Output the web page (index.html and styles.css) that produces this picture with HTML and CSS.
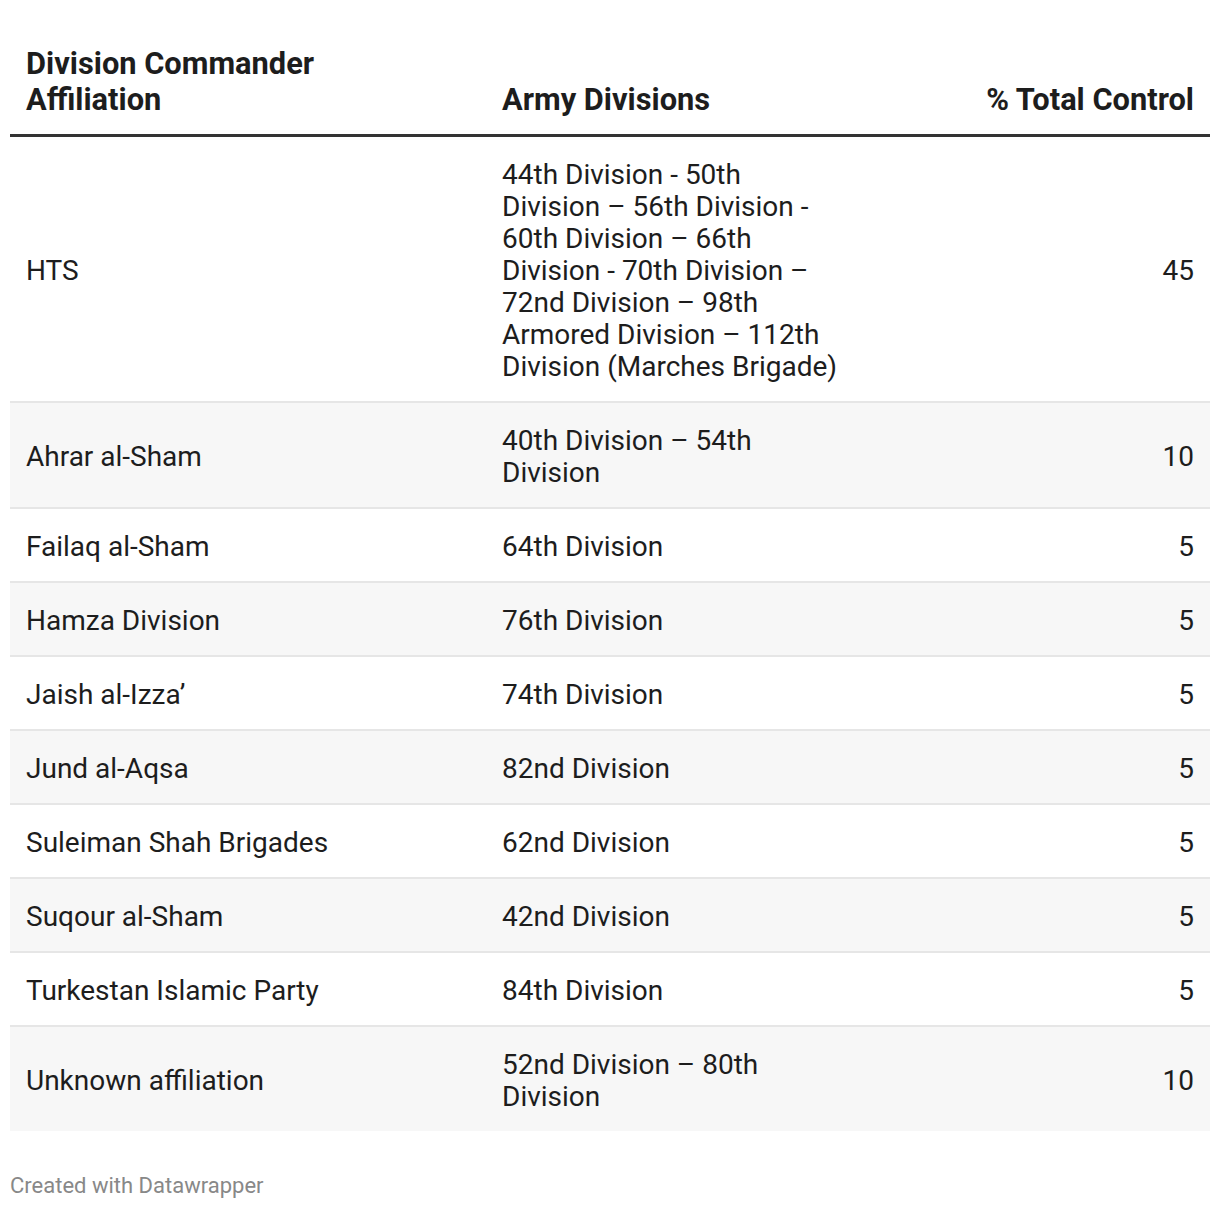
FILE: index.html
```html
<!DOCTYPE html>
<html>
<head>
<meta charset="utf-8">
<link rel="stylesheet" href="styles.css">
</head>
<body>
<div class="chart">
  <table class="dw-table">
    <thead>
      <tr>
        <th class="c1"><span class="th-wrap">Division Commander Affiliation</span></th>
        <th class="c2">Army Divisions</th>
        <th class="c3">% Total Control</th>
      </tr>
    </thead>
    <tbody>
      <tr><td>HTS</td><td>44th Division - 50th Division – 56th Division - 60th Division – 66th Division - 70th Division – 72nd Division – 98th Armored Division – 112th Division (Marches Brigade)</td><td class="num">45</td></tr>
      <tr><td>Ahrar al-Sham</td><td>40th Division – 54th Division</td><td class="num">10</td></tr>
      <tr><td>Failaq al-Sham</td><td>64th Division</td><td class="num">5</td></tr>
      <tr><td>Hamza Division</td><td>76th Division</td><td class="num">5</td></tr>
      <tr><td>Jaish al-Izza’</td><td>74th Division</td><td class="num">5</td></tr>
      <tr><td>Jund al-Aqsa</td><td>82nd Division</td><td class="num">5</td></tr>
      <tr><td>Suleiman Shah Brigades</td><td>62nd Division</td><td class="num">5</td></tr>
      <tr><td>Suqour al-Sham</td><td>42nd Division</td><td class="num">5</td></tr>
      <tr><td>Turkestan Islamic Party</td><td>84th Division</td><td class="num">5</td></tr>
      <tr><td>Unknown affiliation</td><td>52nd Division – 80th Division</td><td class="num">10</td></tr>
    </tbody>
  </table>
  <div class="footer">Created with Datawrapper</div>
</div>
</body>
</html>
```
FILE: styles.css
```css
html, body {
  margin: 0;
  padding: 0;
  background: #ffffff;
}
.chart {
  padding: 46px 10px 0 10px;
  font-family: Roboto, "Liberation Sans", sans-serif;
  color: #1d1d1d;
}
.dw-table {
  width: 1200px;
  border-collapse: collapse;
  table-layout: fixed;
}
.dw-table th {
  font-weight: 700;
  font-size: 30.8px;
  line-height: 36px;
  text-align: left;
  vertical-align: bottom;
  padding: 0 16px 16px 16px;
  border-bottom: 3px solid #333333;
}
.dw-table th.c1 { width: 444px; }
.dw-table th.c2 { width: 338px; }
.dw-table th.c3 { text-align: right; }
.th-wrap {
  display: block;
  max-width: 320px;
}
.dw-table td {
  font-size: 28px;
  line-height: 32px;
  padding: 22px 16px 18px 16px;
  vertical-align: middle;
  border-bottom: 2px solid #e6e6e6;
}
.dw-table tbody tr:nth-child(even) td {
  background: #f7f7f7;
}
.dw-table tbody tr:last-child td {
  border-bottom: none;
}
.dw-table td.num {
  text-align: right;
}
.footer {
  margin-top: 42px;
  font-size: 22px;
  line-height: 26px;
  color: #888888;
}
```
